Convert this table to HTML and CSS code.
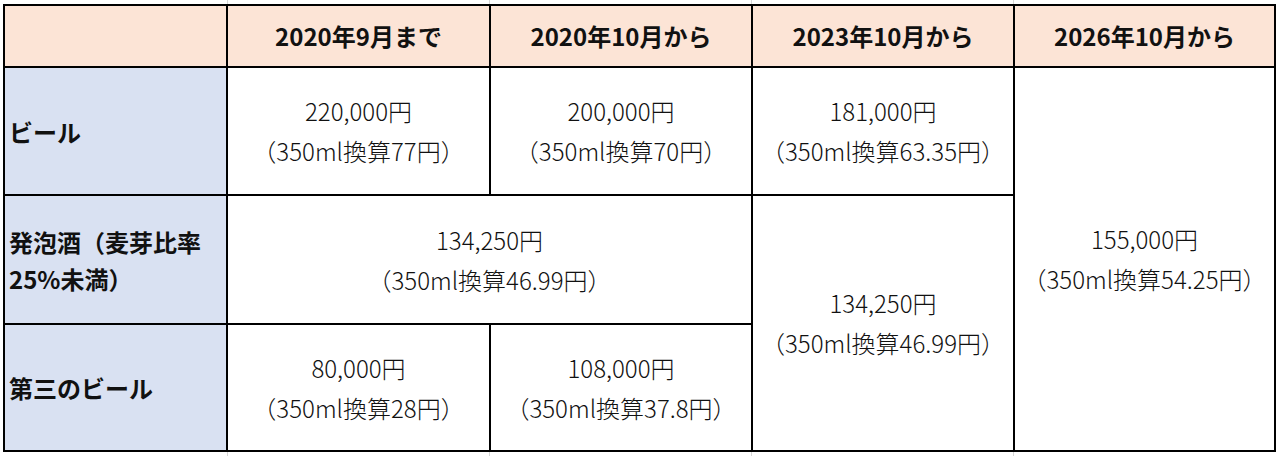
FILE: index.html
```html
<!DOCTYPE html>
<html lang="ja">
<head>
<meta charset="utf-8">
<title>ビール系飲料の酒税</title>
<link rel="stylesheet" href="styles.css">
</head>
<body>
<div class="sheet">
  <div class="strip"><span></span><span></span><span></span><span></span></div>
  <div class="tax-table">
    <div class="cell head"></div>
    <div class="cell head">2020年9月まで</div>
    <div class="cell head">2020年10月から</div>
    <div class="cell head">2023年10月から</div>
    <div class="cell head">2026年10月から</div>

    <div class="cell label">ビール</div>
    <div class="cell val">220,000円<br>（350ml換算77円）</div>
    <div class="cell val">200,000円<br>（350ml換算70円）</div>
    <div class="cell val">181,000円<br>（350ml換算63.35円）</div>
    <div class="cell val span-2026">155,000円<br>（350ml換算54.25円）</div>

    <div class="cell label">発泡酒（麦芽比率<br>25%未満）</div>
    <div class="cell val span-2020">134,250円<br>（350ml換算46.99円）</div>
    <div class="cell val span-2023">134,250円<br>（350ml換算46.99円）</div>

    <div class="cell label">第三のビール</div>
    <div class="cell val">80,000円<br>（350ml換算28円）</div>
    <div class="cell val">108,000円<br>（350ml換算37.8円）</div>
  </div>
  <div class="strip"><span></span><span></span><span></span><span></span></div>
</div>
</body>
</html>
```

FILE: styles.css
```css
html, body {
  margin: 0;
  padding: 0;
  background: #ffffff;
}

body {
  font-family: "Noto Sans CJK JP", "Noto Sans", sans-serif;
  color: #111111;
}

.sheet {
  width: 1276px;
  display: flex;
  flex-direction: column;
}

.strip {
  display: flex;
  height: 4px;
}

.strip span {
  width: 261px;
  border-right: 1px solid #d6d6d6;
}

.strip span:first-child {
  width: 227px;
}

.tax-table {
  margin-left: 3px;
  width: 1273px;
  box-sizing: border-box;
  display: grid;
  grid-template-columns: 221px 261px 260px 260px 259px;
  grid-template-rows: 60px 126px 127px 125px;
  gap: 2px;
  padding: 2px;
  background: #000000;
}

.cell {
  background: #ffffff;
  display: flex;
  align-items: center;
}

.head {
  background: #fce4d6;
  justify-content: center;
  font-weight: 700;
  font-size: 24px;
  line-height: 30px;
}

.label {
  background: #d9e1f2;
  font-weight: 700;
  font-size: 24px;
  line-height: 37px;
  padding-left: 4px;
}

.val {
  justify-content: center;
  text-align: center;
  font-size: 24px;
  font-weight: 300;
  line-height: 40px;
}

.span-2026 {
  grid-column: 5;
  grid-row: 2 / 5;
}

.span-2020 {
  grid-column: 2 / 4;
}

.span-2023 {
  grid-column: 4;
  grid-row: 3 / 5;
}
```
